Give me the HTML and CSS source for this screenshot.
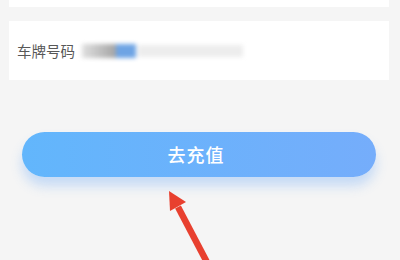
FILE: index.html
```html
<!DOCTYPE html>
<html lang="zh">
<head>
<meta charset="utf-8">
<link rel="stylesheet" href="styles.css">
</head>
<body>
<div class="page">
  <div class="card card-top"></div>
  <div class="card card-plate">
    <span class="label">车牌号码</span>
    <div class="plate">
      <span class="blur b1"></span>
      <span class="blur b2"></span>
      <span class="blur b3"></span>
    </div>
  </div>
  <div class="btn-wrap">
    <button class="btn">去充值</button>
  </div>
</div>
<svg class="arrow" width="400" height="260" viewBox="0 0 400 260">
  <line x1="178" y1="207" x2="210" y2="268" stroke="#e8402f" stroke-width="6.5"/>
  <polygon points="169,191 186,202 170,211" fill="#e8402f"/>
</svg>
</body>
</html>
```
FILE: styles.css
```css
html, body {
  margin: 0;
  padding: 0;
  background: #f5f5f5;
  width: 400px;
  height: 260px;
  overflow: hidden;
  font-family: "Noto Sans CJK SC", "Noto Sans", sans-serif;
}
.page {
  display: flex;
  flex-direction: column;
  padding: 0 11px 0 9px;
}
.card {
  background: #fff;
}
.card-top {
  height: 7px;
}
.card-plate {
  margin-top: 14px;
  height: 59px;
  display: flex;
  align-items: center;
  padding-left: 8px;
}
.label {
  font-size: 14.5px;
  color: #585858;
}
.plate {
  display: flex;
  align-items: center;
  margin-left: 7px;
  filter: blur(2px);
}
.blur {
  display: block;
  height: 14px;
}
.b1 {
  width: 34px;
  background: linear-gradient(90deg, #e0e0e0, #a4a4a4);
}
.b2 {
  width: 20px;
  background: #6ea4e4;
}
.b3 {
  width: 105px;
  height: 12px;
  margin-left: 2px;
  background: #ededed;
}
.btn-wrap {
  margin-top: 52px;
  padding: 0 13px 0 13px;
}
.btn {
  display: block;
  width: 100%;
  height: 45px;
  border: none;
  border-radius: 23px;
  background: linear-gradient(90deg, #62b6fc, #75adfb);
  color: #fff;
  font-family: "Noto Sans CJK SC", sans-serif;
  font-size: 18px;
  font-weight: 500;
  letter-spacing: 1px;
  box-shadow: 0 9px 12px rgba(90, 160, 250, 0.3);
  padding: 0 6px 1px 0;
}
.arrow {
  position: absolute;
  left: 0;
  top: 0;
}
```
